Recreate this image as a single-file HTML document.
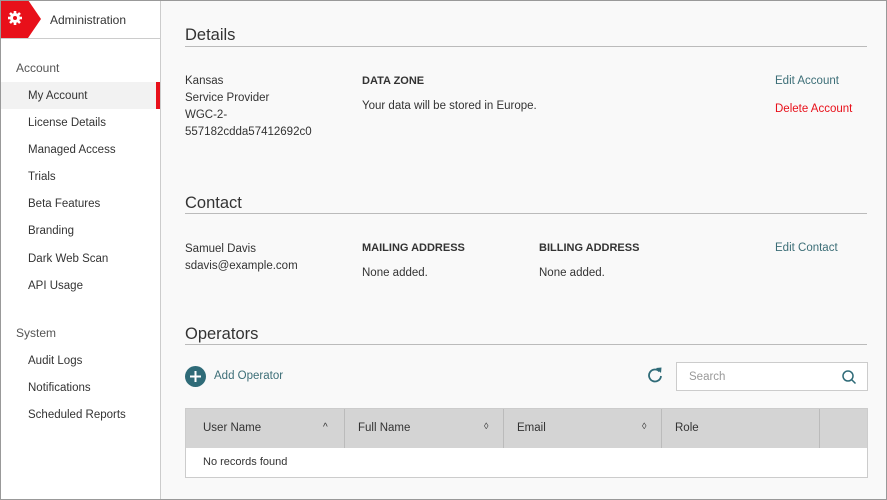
<!DOCTYPE html>
<html><head><style>
*{margin:0;padding:0;box-sizing:border-box}
body{width:887px;height:500px;font-family:"Liberation Sans",sans-serif;color:#333;background:#f9f9f9;position:relative;overflow:hidden;font-size:11.5px;line-height:1.5}
.frame{position:absolute;left:0;top:0;width:887px;height:500px;border:1px solid #999;pointer-events:none}
.side{position:absolute;left:0;top:0;width:161px;height:500px;background:#fff;border-right:1px solid #ccc}
.hdr{height:39px;border-bottom:1px solid #ccc;position:relative}
.a{position:absolute}
.sec{position:absolute;left:16px;color:#555;font-size:12px}
.it{position:absolute;left:28px;font-size:11.5px;color:#333}
.h{position:absolute;left:185px;font-size:16.5px;color:#333;line-height:1.3}
.line{position:absolute;left:185px;width:682px;height:1px;background:#bbb}
b{font-weight:bold;font-size:11px}
.lnk{color:#3c6e77}
</style></head><body>
<div class="side">
 <div class="hdr">
  <svg class="a" style="left:0;top:0" width="42" height="38"><polygon points="0,0 28,0 41,19 28,38 0,38" fill="#e8101a"/>
   <g transform="translate(15,18)" fill="#fff"><circle r="5"/><g stroke="#fff" stroke-width="2.6"><line x1="0" y1="-7" x2="0" y2="7"/><line x1="-7" y1="0" x2="7" y2="0"/><line x1="-5" y1="-5" x2="5" y2="5"/><line x1="-5" y1="5" x2="5" y2="-5"/></g><circle r="2" fill="#e8101a"/></g></svg>
  <div class="a" style="left:50px;top:11px;font-size:12px">Administration</div>
 </div>
 <div class="sec" style="top:59px">Account</div>
 <div class="a" style="left:0;top:82px;width:160px;height:27px;background:#f2f2f2"></div>
 <div class="a" style="left:156px;top:82px;width:4px;height:27px;background:#e8101a"></div>
 <div class="it" style="top:88px">My Account</div>
 <div class="it" style="top:115px">License Details</div>
 <div class="it" style="top:142px">Managed Access</div>
 <div class="it" style="top:169px">Trials</div>
 <div class="it" style="top:196px">Beta Features</div>
 <div class="it" style="top:223px">Branding</div>
 <div class="it" style="top:251px">Dark Web Scan</div>
 <div class="it" style="top:278px">API Usage</div>
 <div class="sec" style="top:324px">System</div>
 <div class="it" style="top:353px">Audit Logs</div>
 <div class="it" style="top:380px">Notifications</div>
 <div class="it" style="top:407px">Scheduled Reports</div>
</div>

<div class="h" style="top:25px">Details</div><div class="line" style="top:46px"></div>
<div class="a" style="left:185px;top:73px;line-height:17px">Kansas<br>Service Provider<br>WGC-2-<br>557182cdda57412692c0</div>
<div class="a" style="left:362px;top:73px"><b>DATA ZONE</b></div>
<div class="a" style="left:362px;top:98px">Your data will be stored in Europe.</div>
<div class="a lnk" style="left:775px;top:73px">Edit Account</div>
<div class="a" style="left:775px;top:101px;color:#e8101a">Delete Account</div>

<div class="h" style="top:193px">Contact</div><div class="line" style="top:213px"></div>
<div class="a" style="left:185px;top:241px;line-height:17px">Samuel Davis<br>sdavis@example.com</div>
<div class="a" style="left:362px;top:240px"><b>MAILING ADDRESS</b></div>
<div class="a" style="left:362px;top:265px">None added.</div>
<div class="a" style="left:539px;top:240px"><b>BILLING ADDRESS</b></div>
<div class="a" style="left:539px;top:265px">None added.</div>
<div class="a lnk" style="left:775px;top:240px">Edit Contact</div>

<div class="h" style="top:324px">Operators</div><div class="line" style="top:344px"></div>
<svg class="a" style="left:185px;top:366px" width="22" height="22"><circle cx="10.5" cy="10.5" r="10.5" fill="#2f6b78"/><path d="M10.5 5v11M5 10.5h11" stroke="#fff" stroke-width="2"/></svg>
<div class="a lnk" style="left:214px;top:368px">Add Operator</div>
<svg class="a" style="left:646px;top:366px" width="18" height="18"><path d="M13.5 5.5A6 6 0 1 0 15 10" fill="none" stroke="#2f6b78" stroke-width="1.8"/><polygon points="10,2 15.5,1.5 15,7" fill="#2f6b78"/></svg>
<div class="a" style="left:676px;top:362px;width:192px;height:29px;background:#fff;border:1px solid #ccc"></div>
<div class="a" style="left:689px;top:369px;color:#999">Search</div>
<svg class="a" style="left:841px;top:369px" width="16" height="16"><circle cx="7" cy="7" r="5" fill="none" stroke="#2f6b78" stroke-width="1.5"/><path d="M10.5 10.5l4 4" stroke="#2f6b78" stroke-width="1.5"/></svg>

<div class="a" style="left:185px;top:408px;width:683px;height:70px;border:1px solid #ccc;background:#fff"></div>
<div class="a" style="left:186px;top:409px;width:681px;height:39px;background:#d4d4d4"></div>
<div class="a" style="left:344px;top:409px;width:1px;height:39px;background:#bbb"></div>
<div class="a" style="left:503px;top:409px;width:1px;height:39px;background:#bbb"></div>
<div class="a" style="left:661px;top:409px;width:1px;height:39px;background:#bbb"></div>
<div class="a" style="left:819px;top:409px;width:1px;height:39px;background:#bbb"></div>
<div class="a" style="left:203px;top:420px">User Name</div><div class="a" style="left:323px;top:420px;font-size:10px">^</div>
<div class="a" style="left:358px;top:420px">Full Name</div><div class="a" style="left:484px;top:420px;font-size:9px">◊</div>
<div class="a" style="left:517px;top:420px">Email</div><div class="a" style="left:642px;top:420px;font-size:9px">◊</div>
<div class="a" style="left:675px;top:420px">Role</div>
<div class="a" style="left:203px;top:454px;font-size:11px">No records found</div>
<div class="frame"></div>
</body></html>
